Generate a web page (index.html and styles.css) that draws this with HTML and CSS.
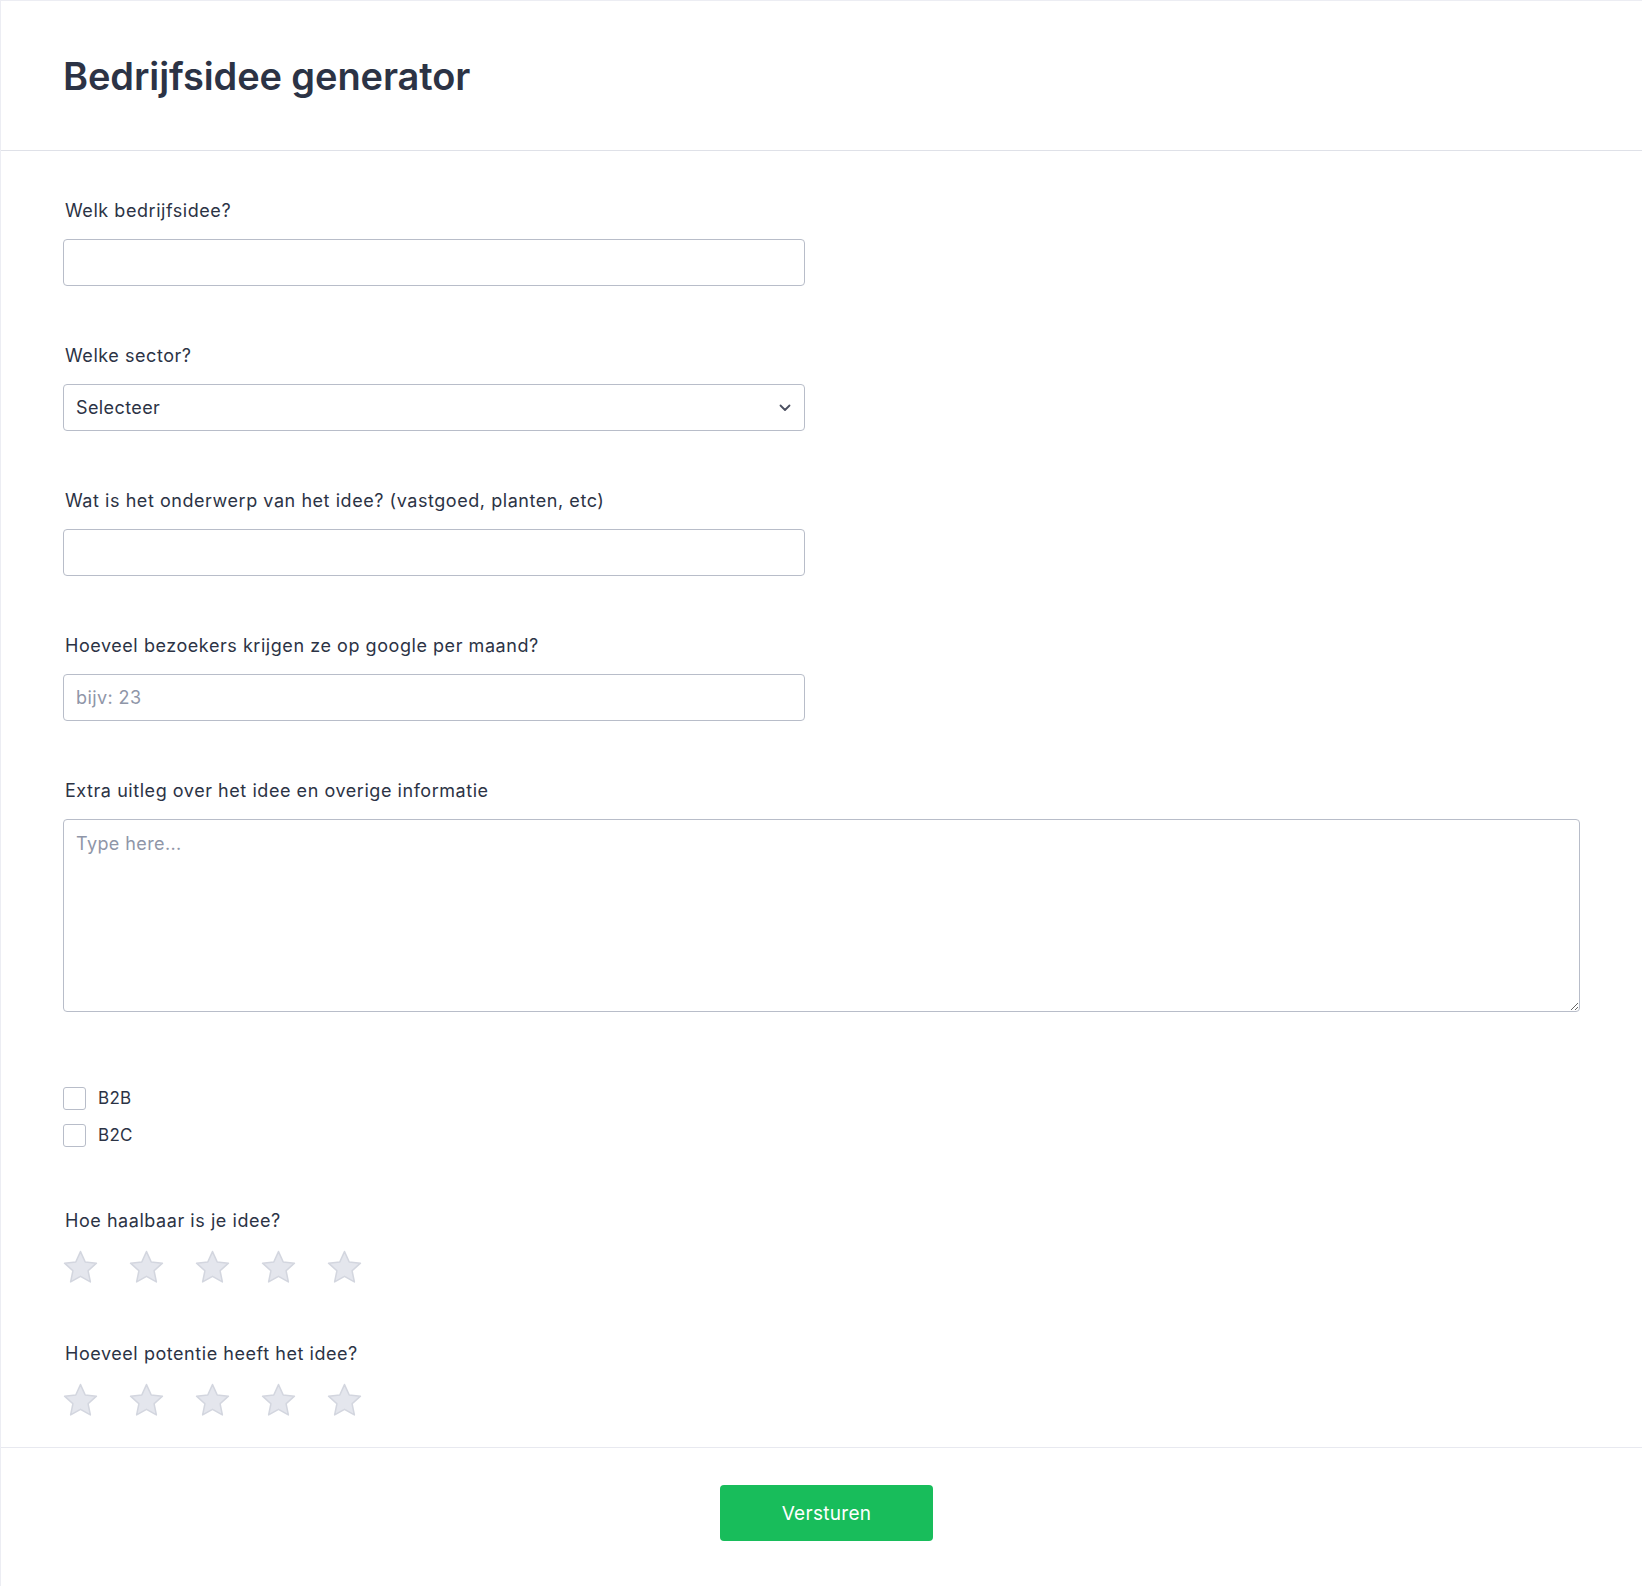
FILE: index.html
```html
<!DOCTYPE html>
<html lang="nl">
<head>
    <meta charset="UTF-8">
    <meta name="viewport" content="width=device-width, initial-scale=1.0">
    <title>Bedrijfsidee generator</title>
    <link rel="stylesheet" href="styles.css">
</head>
<body>
    <form class="form-card">
        <div class="form-header">
            <h1>Bedrijfsidee generator</h1>
        </div>

        <!-- Vragen -->
        <div class="form-body">
            <div class="field">
                <label for="idee">Welk bedrijfsidee?</label>
                <input type="text" id="idee" name="idee">
            </div>

            <div class="field">
                <label for="sector">Welke sector?</label>
                <div class="select-wrap">
                    <select id="sector" name="sector">
                        <option>Selecteer</option>
                    </select>
                    <svg class="chevron" width="12" height="8" viewBox="0 0 12 8">
                        <path d="M1.5 1.5 L6 6 L10.5 1.5" fill="none" stroke="#4a4f60" stroke-width="1.8" stroke-linecap="round" stroke-linejoin="round"/>
                    </svg>
                </div>
            </div>

            <div class="field">
                <label for="onderwerp">Wat is het onderwerp van het idee? (vastgoed, planten, etc)</label>
                <input type="text" id="onderwerp" name="onderwerp">
            </div>

            <div class="field">
                <label for="bezoekers">Hoeveel bezoekers krijgen ze op google per maand?</label>
                <input type="text" id="bezoekers" name="bezoekers" placeholder="bijv: 23">
            </div>

            <div class="field">
                <label for="uitleg">Extra uitleg over het idee en overige informatie</label>
                <textarea id="uitleg" name="uitleg" placeholder="Type here..."></textarea>
            </div>

            <div class="field checks">
                <label class="check"><input type="checkbox" name="b2b"> <span>B2B</span></label>
                <label class="check"><input type="checkbox" name="b2c"> <span>B2C</span></label>
            </div>

            <div class="field">
                <label>Hoe haalbaar is je idee?</label>
                <div class="stars">
                    <svg class="star" viewBox="0 0 36 36"><path d="M18 2.5 L22.6 12.6 L33.5 13.8 L25.4 21.2 L27.6 32 L18 26.6 L8.4 32 L10.6 21.2 L2.5 13.8 L13.4 12.6 Z"/></svg>
                    <svg class="star" viewBox="0 0 36 36"><path d="M18 2.5 L22.6 12.6 L33.5 13.8 L25.4 21.2 L27.6 32 L18 26.6 L8.4 32 L10.6 21.2 L2.5 13.8 L13.4 12.6 Z"/></svg>
                    <svg class="star" viewBox="0 0 36 36"><path d="M18 2.5 L22.6 12.6 L33.5 13.8 L25.4 21.2 L27.6 32 L18 26.6 L8.4 32 L10.6 21.2 L2.5 13.8 L13.4 12.6 Z"/></svg>
                    <svg class="star" viewBox="0 0 36 36"><path d="M18 2.5 L22.6 12.6 L33.5 13.8 L25.4 21.2 L27.6 32 L18 26.6 L8.4 32 L10.6 21.2 L2.5 13.8 L13.4 12.6 Z"/></svg>
                    <svg class="star" viewBox="0 0 36 36"><path d="M18 2.5 L22.6 12.6 L33.5 13.8 L25.4 21.2 L27.6 32 L18 26.6 L8.4 32 L10.6 21.2 L2.5 13.8 L13.4 12.6 Z"/></svg>
                </div>
            </div>

            <div class="field">
                <label>Hoeveel potentie heeft het idee?</label>
                <div class="stars">
                    <svg class="star" viewBox="0 0 36 36"><path d="M18 2.5 L22.6 12.6 L33.5 13.8 L25.4 21.2 L27.6 32 L18 26.6 L8.4 32 L10.6 21.2 L2.5 13.8 L13.4 12.6 Z"/></svg>
                    <svg class="star" viewBox="0 0 36 36"><path d="M18 2.5 L22.6 12.6 L33.5 13.8 L25.4 21.2 L27.6 32 L18 26.6 L8.4 32 L10.6 21.2 L2.5 13.8 L13.4 12.6 Z"/></svg>
                    <svg class="star" viewBox="0 0 36 36"><path d="M18 2.5 L22.6 12.6 L33.5 13.8 L25.4 21.2 L27.6 32 L18 26.6 L8.4 32 L10.6 21.2 L2.5 13.8 L13.4 12.6 Z"/></svg>
                    <svg class="star" viewBox="0 0 36 36"><path d="M18 2.5 L22.6 12.6 L33.5 13.8 L25.4 21.2 L27.6 32 L18 26.6 L8.4 32 L10.6 21.2 L2.5 13.8 L13.4 12.6 Z"/></svg>
                    <svg class="star" viewBox="0 0 36 36"><path d="M18 2.5 L22.6 12.6 L33.5 13.8 L25.4 21.2 L27.6 32 L18 26.6 L8.4 32 L10.6 21.2 L2.5 13.8 L13.4 12.6 Z"/></svg>
                </div>
            </div>
        </div>

        <div class="form-footer">
            <button type="submit" class="submit-btn">Versturen</button>
        </div>
    </form>
</body>
</html>
```

FILE: styles.css
```css
body {
    margin: 0;
    font-family: 'Inter', 'Noto Sans', sans-serif;
    color: #2c3345;
    background: #ffffff;
}
.form-card {
    border-top: 1px solid #ecedf3;
    border-left: 1px solid #ecedf3;
    min-height: 1600px;
    box-sizing: border-box;
}
.form-header {
    padding: 47px 62px 46px;
    border-bottom: 1px solid #dfe1e8;
}
h1 {
    margin: 0;
    font-size: 38px;
    line-height: 56px;
    font-weight: 600;
    letter-spacing: -0.1px;
}
.form-body {
    padding: 48px 62px 28px;
    display: flex;
    flex-direction: column;
    gap: 58px;
}
.field {
    display: flex;
    flex-direction: column;
}
.field > label {
    font-size: 18px;
    line-height: 24px;
    font-weight: 400;
    letter-spacing: 0.55px;
    margin: 0 0 16px 2px;
}
.field input[type="text"],
.field select,
.field textarea {
    box-sizing: border-box;
    width: 742px;
    height: 47px;
    padding: 0 12px;
    border: 1px solid #b8bdc9;
    border-radius: 4px;
    font-family: 'Inter', 'Noto Sans', sans-serif;
    font-size: 18px;
    letter-spacing: 0.4px;
    color: #2c3345;
    background: #ffffff;
    outline: none;
}
.field input::placeholder,
.field textarea::placeholder {
    color: #8f96a8;
}
.select-wrap {
    position: relative;
    width: 742px;
}
.field select {
    appearance: none;
    -webkit-appearance: none;
}
.chevron {
    position: absolute;
    right: 14px;
    top: 20px;
    pointer-events: none;
}
.field textarea {
    width: 100%;
    height: 193px;
    padding: 13px 12px;
    resize: vertical;
}
.checks {
    margin-top: 17px;
    gap: 14px;
}
.field > .check {
    display: flex;
    align-items: center;
    gap: 12px;
    margin: 0;
    font-size: 17px;
    line-height: 23px;
    letter-spacing: 0.3px;
}
.check input {
    appearance: none;
    -webkit-appearance: none;
    width: 23px;
    height: 23px;
    margin: 0;
    border: 1px solid #b8bdc9;
    border-radius: 3px;
    background: #ffffff;
}
.checks + .field {
    margin-top: 4px;
}
.checks + .field + .field {
    margin-top: -2px;
}
.stars {
    display: flex;
    gap: 29px;
    margin-left: -1px;
}
.star {
    width: 37px;
    height: 37px;
    fill: #e4e6ed;
    stroke: #d3d6df;
    stroke-width: 1.5;
    stroke-linejoin: round;
}
.form-footer {
    border-top: 1px solid #e8e9f0;
    padding: 37px 0 60px;
    display: flex;
    justify-content: center;
}
.submit-btn {
    width: 213px;
    height: 56px;
    margin-left: 10px;
    border: none;
    border-radius: 4px;
    background: #18bd5b;
    color: #ffffff;
    font-family: 'Inter', 'Noto Sans', sans-serif;
    font-size: 19px;
    font-weight: 400;
    letter-spacing: 0.3px;
    cursor: pointer;
}
```
